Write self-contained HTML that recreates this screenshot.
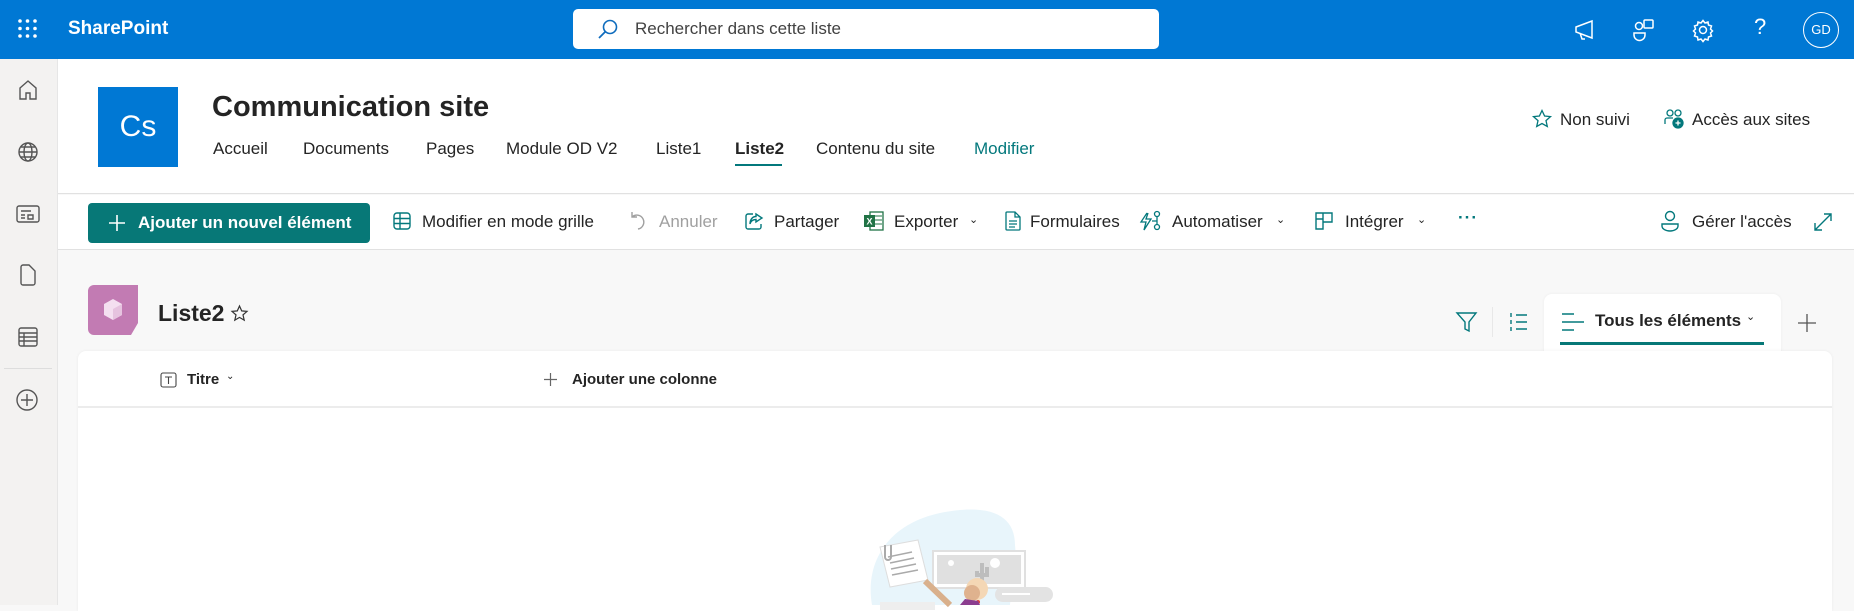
<!DOCTYPE html>
<html><head><meta charset="utf-8"><style>
*{box-sizing:border-box;margin:0;padding:0}
body{width:1854px;height:605px;overflow:hidden;font-family:"Liberation Sans",sans-serif;color:#242424;background:#f8f8f8;position:relative}
.a{position:absolute}
.top{left:0;top:0;width:1854px;height:59px;background:#0078d4}
.rail{left:0;top:59px;width:58px;height:546px;background:#f3f2f1;border-right:1px solid #e6e6e6}
.hdr{left:58px;top:59px;width:1796px;height:135px;background:#fff;border-bottom:1px solid #e1e1e1}
.cmd{left:58px;top:195px;width:1796px;height:55px;background:#fff;border-bottom:1px solid #e1e1e1}
.nav{top:139px;font-size:17px;color:#242424;white-space:nowrap}
.ci{top:212px;font-size:17px;white-space:nowrap}
svg{position:absolute;overflow:visible}
</style></head><body>
<div class="a top"></div>
<!-- waffle -->
<svg style="left:18px;top:19px" width="20" height="20"><g fill="#fff"><circle cx="2" cy="2" r="1.8"/><circle cx="9.5" cy="2" r="1.8"/><circle cx="17" cy="2" r="1.8"/><circle cx="2" cy="9.5" r="1.8"/><circle cx="9.5" cy="9.5" r="1.8"/><circle cx="17" cy="9.5" r="1.8"/><circle cx="2" cy="17" r="1.8"/><circle cx="9.5" cy="17" r="1.8"/><circle cx="17" cy="17" r="1.8"/></g></svg>
<div class="a" style="left:68px;top:18px;color:#fff;font-weight:bold;font-size:19px">SharePoint</div>
<div class="a" style="left:573px;top:9px;width:586px;height:40px;background:#fff;border-radius:5px"></div>
<svg style="left:597px;top:19px" width="22" height="22"><circle cx="13" cy="8" r="6.5" fill="none" stroke="#0f6cbd" stroke-width="1.6"/><path d="M8.5 12.5 L2 19" stroke="#0f6cbd" stroke-width="1.8"/></svg>
<div class="a" style="left:635px;top:19px;font-size:17px;color:#424242">Rechercher dans cette liste</div>
<!-- top right icons -->
<svg style="left:1574px;top:19px" width="22" height="22" fill="none" stroke="#fff" stroke-width="1.5"><path d="M2 8 L18 2 L18 19 L2 13 Z M6 14 L8 20 L11 20"/></svg>
<svg style="left:1633px;top:18px" width="22" height="24" fill="none" stroke="#fff" stroke-width="1.5"><circle cx="6" cy="8" r="3.5"/><rect x="11" y="2" width="9" height="8" rx="1"/><path d="M1 15 h11 v2 a5.5 5.5 0 0 1 -11 0 z"/></svg>
<svg style="left:1692px;top:19px" width="22" height="22" fill="none" stroke="#fff" stroke-width="1.5"><circle cx="11" cy="11" r="3.5"/><path d="M11 1.5 l2 2.5 3-1 .5 3 3 1 -1 3 2 2 -2 2 1 3 -3 1 -.5 3 -3-1 -2 2.5 -2-2.5 -3 1 -.5-3 -3-1 1-3 -2-2 2-2 -1-3 3-1 .5-3 3 1z"/></svg>
<div class="a" style="left:1754px;top:14px;color:#fff;font-size:22px">?</div>
<div class="a" style="left:1803px;top:12px;width:36px;height:36px;border:1.5px solid #fff;border-radius:50%;color:#fff;font-size:13px;text-align:center;line-height:33px">GD</div>

<div class="a rail"></div>
<svg style="left:17px;top:79px" width="22" height="22" fill="none" stroke="#555" stroke-width="1.4"><path d="M3 9 L11 2 L19 9 V20 H13 V14 H9 V20 H3 Z"/></svg>
<svg style="left:17px;top:141px" width="22" height="22" fill="none" stroke="#555" stroke-width="1.4"><circle cx="11" cy="11" r="9"/><ellipse cx="11" cy="11" rx="4" ry="9"/><path d="M2 11 H20 M4 6 H18 M4 16 H18"/></svg>
<svg style="left:16px;top:204px" width="24" height="20" fill="none" stroke="#555" stroke-width="1.4"><rect x="1" y="2" width="22" height="16" rx="2"/><path d="M5 7 H15 M5 11 H9 M5 14 H9 M12 11 h5 v4 h-5z"/></svg>
<svg style="left:19px;top:264px" width="18" height="22" fill="none" stroke="#555" stroke-width="1.4"><path d="M2 3 a2 2 0 0 1 2-2 H10 L16 7 V19 a2 2 0 0 1-2 2 H4 a2 2 0 0 1-2-2 Z"/></svg>
<svg style="left:17px;top:326px" width="22" height="22" fill="none" stroke="#555" stroke-width="1.4"><rect x="2" y="2" width="18" height="18" rx="2"/><path d="M2 7 H20 M2 11 H20 M2 15 H20 M7 7 V20"/></svg>
<div class="a" style="left:4px;top:368px;width:48px;height:1px;background:#ddd"></div>
<svg style="left:15px;top:388px" width="24" height="24" fill="none" stroke="#555" stroke-width="1.4"><circle cx="12" cy="12" r="10"/><path d="M12 6 V18 M6 12 H18"/></svg>

<div class="a hdr"></div>
<div class="a" style="left:98px;top:87px;width:80px;height:80px;background:#0078d4;color:#fff;font-size:30px;text-align:center;line-height:80px">Cs</div>
<div class="a" style="left:212px;top:91px;font-size:29px;font-weight:bold;color:#242424">Communication site</div>
<div class="a nav" style="left:213px">Accueil</div>
<div class="a nav" style="left:303px">Documents</div>
<div class="a nav" style="left:426px">Pages</div>
<div class="a nav" style="left:506px">Module OD V2</div>
<div class="a nav" style="left:656px">Liste1</div>
<div class="a nav" style="left:735px;font-weight:bold">Liste2</div>
<div class="a" style="left:735px;top:164px;width:47px;height:2px;background:#03787c"></div>
<div class="a nav" style="left:816px">Contenu du site</div>
<div class="a nav" style="left:974px;color:#03787c">Modifier</div>
<svg style="left:1532px;top:109px" width="20" height="20" fill="none" stroke="#03787c" stroke-width="1.3"><path d="M10 1.5 L12.6 7 L18.5 7.6 L14 11.6 L15.3 17.5 L10 14.5 L4.7 17.5 L6 11.6 L1.5 7.6 L7.4 7 Z"/></svg>
<div class="a" style="left:1560px;top:110px;font-size:17px">Non suivi</div>
<svg style="left:1664px;top:108px" width="22" height="22" fill="none" stroke="#03787c" stroke-width="1.3"><circle cx="6" cy="5" r="3"/><circle cx="14" cy="5" r="3"/><path d="M1 16 V12 a2 2 0 0 1 2-2 H9"/><circle cx="14" cy="15" r="5" fill="#03787c"/><path d="M14 12.5 V17.5 M11.5 15 H16.5" stroke="#fff"/></svg>
<div class="a" style="left:1692px;top:110px;font-size:17px">Accès aux sites</div>

<div class="a cmd"></div>
<div class="a" style="left:88px;top:203px;width:282px;height:40px;background:#077877;border-radius:4px;color:#fff;font-weight:bold;font-size:17px;line-height:40px;padding-left:50px">Ajouter un nouvel élément</div>
<svg style="left:109px;top:215px" width="16" height="16" stroke="#fff" stroke-width="1.6"><path d="M8 0 V16 M0 8 H16"/></svg>
<svg style="left:393px;top:212px" width="18" height="18" fill="none" stroke="#03787c" stroke-width="1.4"><rect x="1" y="1" width="16" height="16" rx="3"/><path d="M1 6.5 H17 M1 11.5 H17 M7 1 V17"/></svg>
<div class="a ci" style="left:422px">Modifier en mode grille</div>
<svg style="left:630px;top:211px" width="18" height="20" fill="none" stroke="#a0a0a0" stroke-width="1.4"><path d="M2 1 V6 H7 M2 6 A7 7 0 1 1 8 18"/></svg>
<div class="a ci" style="left:659px;color:#a0a0a0">Annuler</div>
<svg style="left:745px;top:212px" width="20" height="18" fill="none" stroke="#03787c" stroke-width="1.4"><path d="M8 2 H3 a2 2 0 0 0-2 2 V15 a2 2 0 0 0 2 2 H14 a2 2 0 0 0 2-2 V12 M11 2 L17 6 L11 10 V7.5 C7 7.5 5.5 10 5 12 C5 7 8 4.5 11 4.5 Z"/></svg>
<div class="a ci" style="left:774px">Partager</div>
<svg style="left:864px;top:211px" width="20" height="20"><rect x="6" y="1" width="13" height="18" fill="none" stroke="#217346" stroke-width="1.3"/><path d="M10 5H18M10 9H18M10 13H18" stroke="#217346"/><rect x="0" y="4" width="11" height="12" fill="#217346"/><text x="2.5" y="13.5" font-size="9" fill="#fff" font-family="Liberation Sans" font-weight="bold">X</text></svg>
<div class="a ci" style="left:894px">Exporter</div>
<div class="a" style="left:969px;top:213px;font-size:11px">&#8964;</div>
<svg style="left:1005px;top:211px" width="16" height="20" fill="none" stroke="#03787c" stroke-width="1.3"><path d="M1 2 a1 1 0 0 1 1-1 H10 L15 6 V18 a1 1 0 0 1-1 1 H2 a1 1 0 0 1-1-1 Z M10 1 V6 H15 M4 10 H12 M4 13 H12 M4 16 H10"/></svg>
<div class="a ci" style="left:1030px">Formulaires</div>
<svg style="left:1139px;top:210px" width="24" height="22" fill="none" stroke="#03787c" stroke-width="1.3"><path d="M8 3 L2 12 H7 L5 20 L12 9 H7 L9 3"/><circle cx="18" cy="4" r="2.5"/><circle cx="18" cy="17" r="2.5"/><path d="M18 6.5 V14.5 M13 11 H18"/></svg>
<div class="a ci" style="left:1172px">Automatiser</div>
<div class="a" style="left:1276px;top:213px;font-size:11px">&#8964;</div>
<svg style="left:1315px;top:212px" width="18" height="18" fill="none" stroke="#03787c" stroke-width="1.4"><path d="M1 1 H17 V10 H8 V17 H1 Z M8 1 V10 M1 7 H8"/></svg>
<div class="a ci" style="left:1345px">Intégrer</div>
<div class="a" style="left:1417px;top:213px;font-size:11px">&#8964;</div>
<div class="a" style="left:1458px;top:208px;font-size:17px;color:#03787c;letter-spacing:1px;font-weight:bold">···</div>
<svg style="left:1661px;top:210px" width="18" height="22" fill="none" stroke="#03787c" stroke-width="1.4"><circle cx="9" cy="6" r="4.5"/><path d="M1 14 H17 V16 a8 5 0 0 1-16 0 Z"/></svg>
<div class="a ci" style="left:1692px">Gérer l'accès</div>
<svg style="left:1814px;top:213px" width="18" height="18" fill="none" stroke="#03787c" stroke-width="1.4"><path d="M1 17 L17 1 M10 1 H17 V8 M1 10 V17 H8"/></svg>

<!-- list title -->
<svg style="left:88px;top:285px" width="50" height="50"><path d="M6 0 H50 V38 L43 50 H6 a6 6 0 0 1-6-6 V6 a6 6 0 0 1 6-6Z" fill="#c27bb3"/><path d="M25 14 L34 19 V30 L25 35 L16 30 V19Z" fill="#f4dff0"/><path d="M25 24 L34 19 V30 L25 35Z" fill="#e6c3df"/></svg>
<div class="a" style="left:158px;top:300px;font-size:23px;font-weight:bold">Liste2</div>
<svg style="left:231px;top:305px" width="17" height="17" fill="none" stroke="#333" stroke-width="1.2"><path d="M8.5 1 L10.7 5.9 L16 6.4 L12 9.9 L13.2 15.2 L8.5 12.4 L3.8 15.2 L5 9.9 L1 6.4 L6.3 5.9 Z"/></svg>

<svg style="left:1456px;top:311px" width="22" height="22" fill="none" stroke="#03787c" stroke-width="1.4"><path d="M1 2 H20 L13 11 V20 L9 18 V11 Z"/></svg>
<div class="a" style="left:1492px;top:307px;width:1px;height:30px;background:#e8e8e8"></div>
<svg style="left:1508px;top:312px" width="20" height="20" fill="none" stroke="#03787c" stroke-width="1.4"><path d="M8 3 H19 M8 10 H19 M8 17 H19 M3 1 V5 M3 8 V12 M3 15 V19"/></svg>
<div class="a" style="left:1544px;top:294px;width:237px;height:60px;background:#fff;border-radius:8px 8px 0 0;box-shadow:0 0 3px rgba(0,0,0,.05)"></div>
<svg style="left:1562px;top:312px" width="22" height="20" stroke="#03787c" stroke-width="1.5"><path d="M0 2 H12 M0 10 H22 M0 18 H12"/></svg>
<div class="a" style="left:1595px;top:311px;font-size:17px;font-weight:bold">Tous les éléments</div>
<div class="a" style="left:1746px;top:310px;font-size:11px">&#8964;</div>
<div class="a" style="left:1560px;top:342px;width:204px;height:3px;background:#077877"></div>
<svg style="left:1798px;top:314px" width="18" height="18" stroke="#555" stroke-width="1.3"><path d="M9 0 V18 M0 9 H18"/></svg>

<!-- card -->
<div class="a" style="left:78px;top:351px;width:1754px;height:260px;background:#fff;border-radius:8px 8px 0 0;box-shadow:0 0 3px rgba(0,0,0,.06)"></div>
<div class="a" style="left:78px;top:406px;width:1754px;height:2px;background:#ececec"></div>
<svg style="left:160px;top:372px" width="17" height="16" fill="none" stroke="#444" stroke-width="1.1"><rect x="1" y="1" width="15" height="14" rx="2"/><path d="M5 5 H12 M8.5 5 V12"/></svg>
<div class="a" style="left:187px;top:371px;font-size:15px;font-weight:bold">Titre</div>
<div class="a" style="left:226px;top:371px;font-size:10px">&#8964;</div>
<svg style="left:544px;top:373px" width="13" height="13" stroke="#666" stroke-width="1.2"><path d="M6.5 0 V13 M0 6.5 H13"/></svg>
<div class="a" style="left:572px;top:371px;font-size:15px;font-weight:bold">Ajouter une colonne</div>

<!-- illustration -->
<svg style="left:860px;top:505px" width="200" height="100">
<path d="M12 100 C5 60 25 20 80 8 C130 -2 155 10 155 40 C158 70 150 95 150 100 Z" fill="#e8f5fb"/>
<rect x="73" y="46" width="92" height="37" fill="#fff" stroke="#e0e0e0" stroke-width="2"/>
<rect x="77" y="50" width="84" height="29" fill="#e0e0e0"/>
<circle cx="91" cy="58" r="3" fill="#fff"/><circle cx="135" cy="58" r="5" fill="#fff"/>
<path d="M122 78 V58 M117 66 V70 H127 V62" stroke="#bdbdbd" stroke-width="4" fill="none"/>
<rect x="135" y="82" width="58" height="15" rx="7.5" fill="#e3e3e3"/>
<path d="M142 89 H170" stroke="#fff" stroke-width="2"/>
<path d="M20 42 L58 35 L68 75 L30 82 Z" fill="#fff" stroke="#ddd"/>
<path d="M28 52 L52 47 M30 58 L54 53 M31 64 L56 59 M32 70 L58 65" stroke="#aaa" stroke-width="1.5"/>
<path d="M25 40 V52 a3 3 0 0 0 6 0 V40" stroke="#aaa" stroke-width="2" fill="none"/>
<path d="M65 76 L90 100" stroke="#d9b08c" stroke-width="6"/>
<circle cx="117" cy="84" r="11" fill="#f4d7b5"/>
<circle cx="112" cy="88" r="8" fill="#dfb28e"/>
<circle cx="118" cy="97" r="2" fill="#e0443a"/>
<path d="M100 100 L105 94 L118 96 L120 100Z" fill="#8b3d8f"/>
<rect x="20" y="97" width="55" height="8" fill="#eee"/>
</svg>
</body></html>
